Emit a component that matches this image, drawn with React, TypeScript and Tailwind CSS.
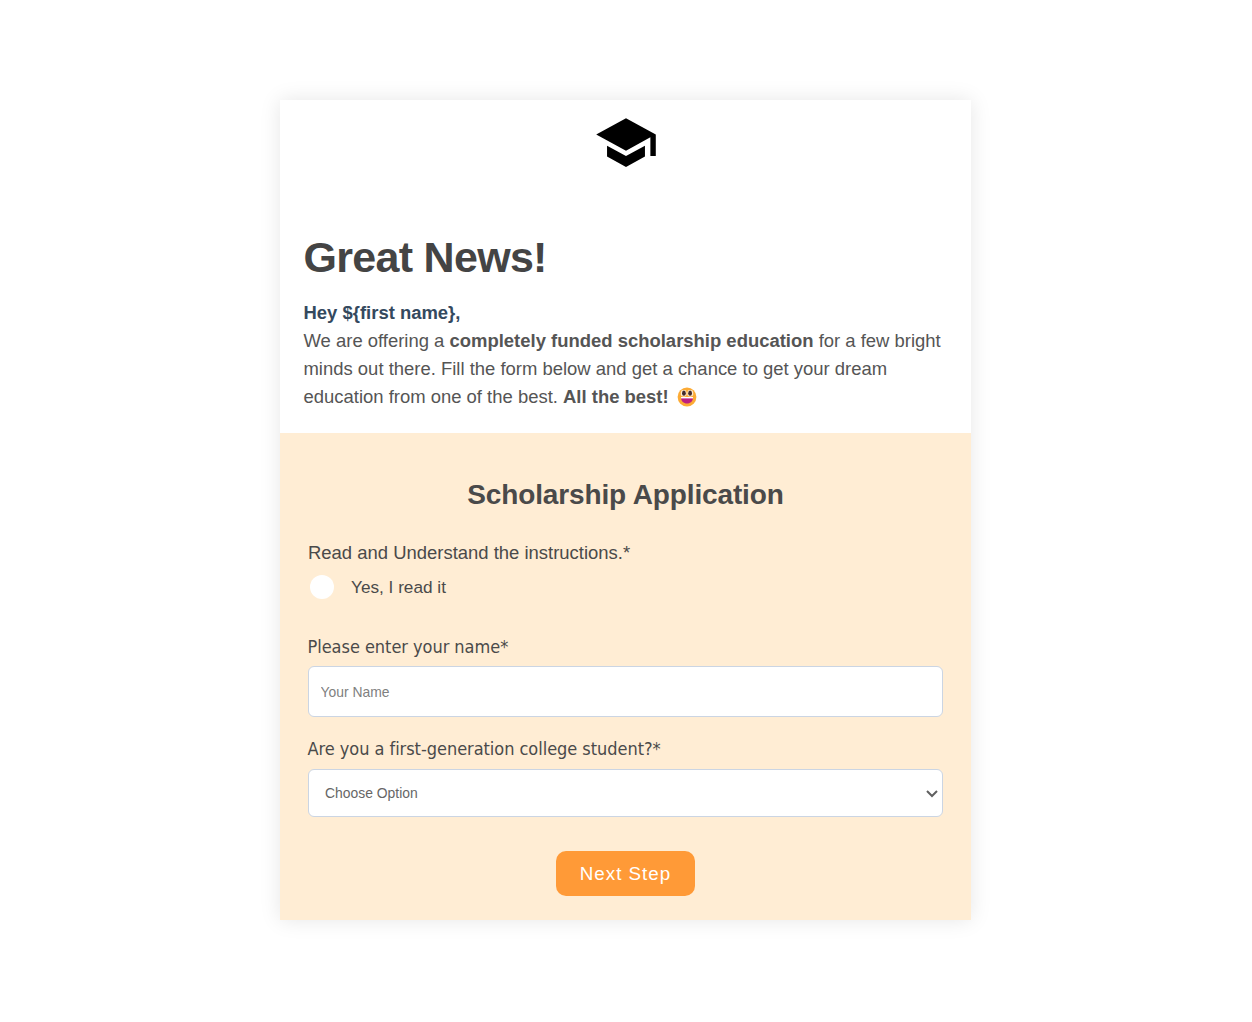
import type { ReactNode } from "react";
import { MdSchool } from "react-icons/md";

type FieldLabelProps = {
    htmlFor: string;
    children: ReactNode;
};

function FieldLabel({ htmlFor, children }: FieldLabelProps) {
    return (
        <label
            htmlFor={htmlFor}
            className="-ml-[0.5px] block h-7 whitespace-nowrap font-['DejaVu_Sans_Condensed','DejaVu_Sans',sans-serif] text-[18px] leading-7 tracking-[-0.04px] text-[#4a4a4a]"
        >
            {children}
        </label>
    );
}

function SmileyIcon() {
    return (
        <svg
            viewBox="0 0 20 20"
            className="ml-2 inline-block h-5 w-5 align-[-4px]"
            aria-hidden="true"
        >
            <circle cx="10" cy="10" r="9.4" fill="#fcab35" />
            <rect x="3.8" y="3" width="5.8" height="6.6" rx="2.4" fill="#fff" opacity=".75" />
            <rect x="10.4" y="3" width="5.8" height="6.6" rx="2.4" fill="#fff" opacity=".75" />
            <ellipse cx="6.9" cy="6.2" rx="1.9" ry="2.6" fill="#422b2b" />
            <ellipse cx="13.1" cy="6.2" rx="1.9" ry="2.6" fill="#422b2b" />
            <path d="M4 10.5h12c0 3.8-2.6 6-6 6s-6-2.2-6-6z" fill="#bd1e80" />
            <path d="M4 10h12v1.4H4z" fill="#fff" />
        </svg>
    );
}

export default function App() {
    return (
        <main className="flex min-h-[1022px] justify-center bg-white pt-[100px] pr-px font-['Liberation_Sans',Arial,sans-serif]">
            <div className="flex h-[820px] w-[691px] flex-col bg-white shadow-[0_0_20px_rgba(0,0,0,0.1)]">
                <header className="h-[333px] pt-[10px] pl-[23.5px]">
                    <MdSchool className="mx-auto h-[65px] w-[65px] -translate-x-[11.5px] text-black" />
                    <h1 className="mt-[54px] text-[43px] leading-[56px] font-bold tracking-[-0.7px] text-[#444]">
                        Great News!
                    </h1>
                    <div className="mt-[14.4px] text-[18.47px] leading-[27.8px] whitespace-nowrap text-[#555]">
                        <p className="font-bold text-[#34495e]">{"Hey ${first name},"}</p>
                        <p>
                            We are offering a <b>completely funded scholarship education</b> for a few bright
                            <br />
                            minds out there. Fill the form below and get a chance to get your dream
                            <br />
                            education from one of the best. <b>All the best!</b>
                            <SmileyIcon />
                        </p>
                    </div>
                </header>

                <form
                    className="flex flex-1 flex-col bg-[#ffedd4] px-7 pt-[42px]"
                    onSubmit={(e) => e.preventDefault()}
                >
                    <h2 className="text-center text-[28px] leading-10 font-bold tracking-[-0.13px] text-[#4a4a4a]">
                        Scholarship Application
                    </h2>

                    <p className="mt-6 text-[18.45px] leading-7 text-[#4a4a4a]">
                        Read and Understand the instructions.*
                    </p>
                    <label className="mt-[5px] flex h-[30px] items-center pl-[2px] text-[17.2px] text-[#4a4a4a]">
                        <input
                            type="radio"
                            name="instructions"
                            className="mr-[17px] h-6 w-6 appearance-none rounded-full bg-white"
                        />
                        <span className="pt-px">Yes, I read it</span>
                    </label>

                    <div className="mt-[31px]">
                        <FieldLabel htmlFor="name">Please enter your name*</FieldLabel>
                        <input
                            id="name"
                            type="text"
                            placeholder="Your Name"
                            className="mt-[5px] block h-[51px] w-full rounded-md border border-[#cbd5e3] bg-white px-[11.5px] text-[13.9px] placeholder:text-[#808080]"
                        />
                    </div>

                    <div className="mt-[18px]">
                        <FieldLabel htmlFor="generation">
                            Are you a first-generation college student?*
                        </FieldLabel>
                        <div className="relative mt-[6px]">
                            <select
                                id="generation"
                                className="block h-12 w-full appearance-none rounded-md border border-[#cbd5e3] bg-white px-4 text-[13.9px] text-[#666]"
                            >
                                <option>Choose Option</option>
                            </select>
                            <svg
                                viewBox="0 0 12 8"
                                className="pointer-events-none absolute top-[21px] right-[5px] h-2 w-3"
                                fill="none"
                                stroke="#606060"
                                strokeWidth="2"
                            >
                                <path d="M1 1l5 5 5-5" />
                            </svg>
                        </div>
                    </div>

                    <button
                        type="submit"
                        className="mx-auto mt-[34px] h-[45px] w-[139px] rounded-[10px] bg-[#ff9a37] pt-px text-[18.8px] tracking-[1px] text-white"
                    >
                        Next Step
                    </button>
                </form>
            </div>
        </main>
    );
}
